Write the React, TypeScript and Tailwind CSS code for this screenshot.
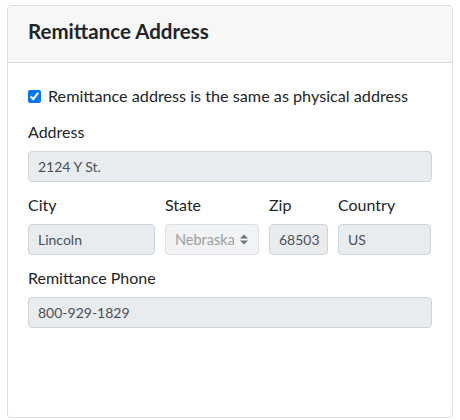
import React from 'react';

const font = { fontFamily: 'Lato, "Open Sans", sans-serif' };

function Field({ label, value, className = '' }: { label: string; value: string; className?: string }) {
  return (
    <div className={className}>
      <label className="block text-[16px] leading-[24px] text-[#212529] mb-[7px]">{label}</label>
      <div className="h-[31px] px-[9px] flex items-center rounded-[4px] border border-[#ced4da] bg-[#e9ecef] text-[14px] text-[#495057] overflow-hidden whitespace-nowrap">
        {value}
      </div>
    </div>
  );
}

function StateSelect() {
  return (
    <div>
      <label className="block text-[16px] leading-[24px] text-[#212529] mb-[7px]">State</label>
      <div className="h-[31px] pl-[9px] pr-[10px] flex items-center gap-[6px] rounded-[4px] border border-[#dee2e6] bg-[#f1f3f5] text-[14.5px] text-[#9a9ea3]">
        <span className="flex-1 overflow-hidden whitespace-nowrap">Nebraska</span>
        <svg width="8" height="11" viewBox="0 0 8 11" className="shrink-0">
          <path d="M0 4.5 L4 0.5 L8 4.5 Z" fill="#6c757d" />
          <path d="M0 6.5 L4 10.5 L8 6.5 Z" fill="#6c757d" />
        </svg>
      </div>
    </div>
  );
}

export default function App() {
  return (
    <div className="w-[460px] h-[420px] bg-white pt-[5px] pl-[7px]" style={font}>
      <div className="w-[446px] h-[413px] border border-[#dfdfdf] rounded-[4px] bg-white flex flex-col overflow-hidden">
        <div className="h-[57px] px-[20px] pb-[5px] flex items-center bg-[#f7f7f7] border-b border-[#dfdfdf]">
          <h2 className="text-[20.5px] font-bold text-[#212529]">Remittance Address</h2>
        </div>
        <div className="px-[20px] pt-[21px]">
          <div className="flex items-center h-[24px] gap-[7px] mb-[12px]">
            <input type="checkbox" checked readOnly className="w-[13px] h-[13px] m-0 accent-[#0075ff]" />
            <span className="text-[16.2px] text-[#212529] whitespace-nowrap">Remittance address is the same as physical address</span>
          </div>
          <Field label="Address" value="2124 Y St." className="mb-[11px]" />
          <div className="grid grid-cols-[127px_94px_59px_93px] gap-x-[10px] mb-[11px]">
            <Field label="City" value="Lincoln" />
            <StateSelect />
            <Field label="Zip" value="68503" />
            <Field label="Country" value="US" />
          </div>
          <Field label="Remittance Phone" value="800-929-1829" />
        </div>
      </div>
    </div>
  );
}
